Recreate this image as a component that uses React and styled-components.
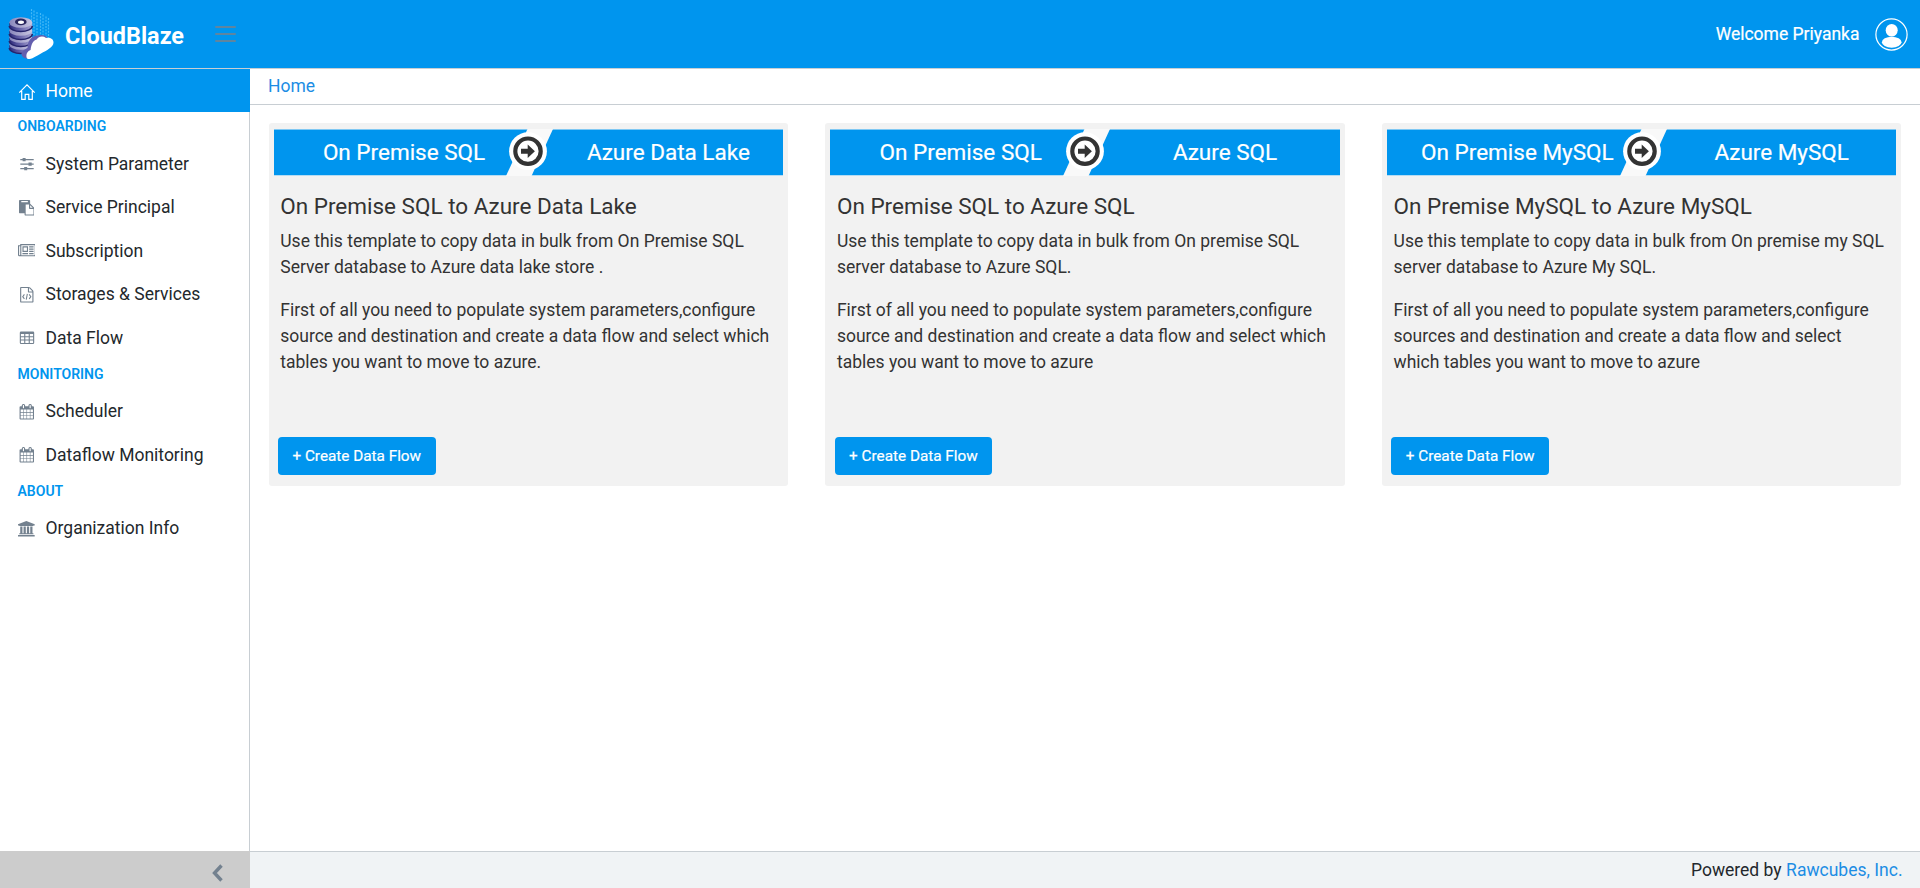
import React from "react";
import styled, { createGlobalStyle } from "styled-components";

const BLUE = "#0095ee";
const LINK = "#1c8de4";
const LINE = "#c8ced3";
const MUTED = "#73818f";

const GlobalStyle = createGlobalStyle`
  *, *::before, *::after { box-sizing: border-box; }
  body {
    margin: 0;
    background: #fff;
    color: #23282c;
    font-family: Roboto, "Liberation Sans", sans-serif;
    font-size: 17.5px;
    line-height: 1.5;
  }
  h2, p { margin: 0; font-weight: 400; }
`;

const Page = styled.div`
  display: flex;
  flex-direction: column;
  height: 100vh;
  overflow: hidden;
`;

const Header = styled.header`
  display: flex;
  align-items: center;
  flex: none;
  height: 69px;
  padding: 0 12px 0 8px;
  background: ${BLUE};
  border-bottom: 1px solid ${LINE};
  color: #fff;
`;

const Brand = styled.svg`
  display: block;
  width: 190px;
  height: 56px;
  overflow: visible;
`;

const MenuButton = styled.button`
  display: flex;
  flex-direction: column;
  gap: 5px;
  width: 21px;
  margin-left: 17px;
  padding: 0;
  border: 0;
  background: none;
`;

const MenuBar = styled.span`
  height: 2px;
  border-radius: 1px;
  background: #5f859f;
`;

const Welcome = styled.span`
  margin-left: auto;
  margin-right: 15.5px;
  font-size: 17.5px;
  -webkit-text-stroke: 0.2px #fff;
`;

const Avatar = styled.svg`
  display: block;
  width: 33px;
  height: 33px;
`;

const Body = styled.div`
  display: flex;
  flex: 1;
  min-height: 0;
`;

const Sidebar = styled.aside`
  display: flex;
  flex-direction: column;
  flex: none;
  width: 250px;
  background: linear-gradient(to left, ${LINE} 1px, #fff 1px);
`;

const Nav = styled.nav`
  flex: 1;
`;

const NavItem = styled.a`
  display: flex;
  align-items: center;
  gap: 10px;
  height: ${(p) => (p.$active ? 43 : 43.5)}px;
  padding: ${(p) => (p.$active ? 1 : 0)}px 0 0 17.5px;
  background: ${(p) => (p.$active ? BLUE : "transparent")};
  color: ${(p) => (p.$active ? "#fff" : "#23282c")};
  svg { color: ${(p) => (p.$active ? "#fff" : MUTED)}; }
`;

const IconBox = styled.span`
  display: flex;
  align-items: center;
  justify-content: center;
  width: 18px;
  height: 18px;
  svg { display: block; flex: none; margin-top: 1px; }
`;

const NavTitle = styled.div`
  height: 30px;
  padding-left: 17.5px;
  color: ${BLUE};
  font-size: 14px;
  font-weight: 600;
  line-height: 29.5px;
`;

const Minimizer = styled.button`
  display: flex;
  align-items: center;
  justify-content: flex-end;
  height: 37px;
  padding: 6px 27px 0 0;
  border: 0;
  background: #ccc;
`;

const Main = styled.main`
  display: flex;
  flex-direction: column;
  flex: 1;
  min-width: 0;
`;

const Breadcrumb = styled.div`
  height: 36px;
  padding: 4px 18px 0;
  border-bottom: 1px solid ${LINE};
  color: ${LINK};
`;

const Cards = styled.div`
  display: grid;
  grid-template-columns: repeat(3, 1fr);
  gap: 37.5px;
  flex: 1;
  align-items: start;
  padding: 18px 18.75px;
`;

const Card = styled.section`
  display: flex;
  flex-direction: column;
  height: 363px;
  padding: 6px 5px 11px;
  border-radius: 3px;
  background: #f2f2f2;
  color: #333;
`;

const Banner = styled.div`
  display: grid;
  grid-template-columns: 1fr 1fr;
  position: relative;
  height: 47px;
  background: ${BLUE};
  border-top: 1px solid #7fc8f3;
  border-bottom: 1px solid #b5dcf3;
  color: #fff;
  font-size: 22.5px;
  line-height: 45px;
  text-align: center;
  -webkit-text-stroke: 0.2px #fff;
`;

const BannerName = styled.span`
  padding-left: ${(p) => p.$inset}px;
  white-space: nowrap;
  z-index: 1;
`;

const BannerMark = styled.svg`
  position: absolute;
  left: 50%;
  top: -1px;
  width: 50px;
  height: 47px;
  margin-left: -25px;
`;

const CardText = styled.div`
  flex: 1;
  padding: 14px 6px 0 6.5px;
`;

const CardTitle = styled.h2`
  margin-bottom: 9px;
  font-size: 22.5px;
  line-height: 26px;
  padding-top: 3px;
`;

const Paragraph = styled.p`
  margin-bottom: 17.25px;
  line-height: 26px;
`;

const CreateButton = styled.button`
  align-self: flex-start;
  width: 157.5px;
  height: 38px;
  margin-left: 4.25px;
  padding: 0;
  border: 0;
  border-radius: 4px;
  background: ${BLUE};
  color: #fff;
  font: 400 15.3px Roboto, "Liberation Sans", sans-serif;
  -webkit-text-stroke: 0.2px #fff;
`;

const Footer = styled.footer`
  display: flex;
  align-items: center;
  justify-content: flex-end;
  gap: 4.5px;
  height: 37px;
  padding-right: 17.5px;
  border-top: 1px solid ${LINE};
  background: #f0f3f5;
`;

const FooterLink = styled.a`
  color: ${LINK};
`;

const Glyph = ({ w = 1792, children }) => (
  <svg width={(w / 1792) * 15.6} height="15.6" viewBox={`0 0 ${w} 1792`} fill="currentColor">
    {children}
  </svg>
);

const HomeIcon = () => (
  <svg width="18" height="18" viewBox="0 0 18 18" fill="none" stroke="currentColor" strokeWidth="1.2">
    <path d="M1.300 9.700 9 1.900l7.700 7.800M3.700 8v8.300h3.500v-5h3.600v5h3.500V8" />
  </svg>
);

const SlidersIcon = () => (
  <svg width="18" height="18" viewBox="0 0 18 18" fill="currentColor">
    <path d="M2.300 4h13.400v1.200H2.300zM2.300 8.500h13.400v1.200H2.300zM2.300 13h13.400v1.200H2.300zM4.600 3h3v3.300h-3zM10.500 7.500h3.200v3.300h-3.200zM6.200 12h3v3.300h-3z" />
  </svg>
);

const PasteIcon = () => (
  <Glyph>
    <path d="M768 1664h896v-640h-416q-40 0-68-28t-28-68v-416h-384v1152zm256-1440v-64q0-13-9.500-22.500t-22.500-9.500h-704q-13 0-22.500 9.500t-9.500 22.500v64q0 13 9.500 22.500t22.500 9.500h704q13 0 22.500-9.500t9.500-22.500zm256 672h299l-299-299v299zm512 128v672q0 40-28 68t-68 28h-960q-40 0-68-28t-28-68v-160h-544q-40 0-68-28t-28-68v-1344q0-40 28-68t68-28h1088q40 0 68 28t28 68v328q21 13 36 28l408 408q28 28 48 68t20 76z" />
  </Glyph>
);

const NewsIcon = () => (
  <Glyph w={2048}>
    <path d="M1024 512h-384v384h384v-384zm128 640v128h-640v-128h640zm0-768v640h-640v-640h640zm640 768v128h-512v-128h512zm0-256v128h-512v-128h512zm0-256v128h-512v-128h512zm0-256v128h-512v-128h512zm-1536 960v-960h-128v960q0 26 19 45t45 19 45-19 19-45zm1664 0v-1088h-1536v1088q0 33-11 64h1483q26 0 45-19t19-45zm128-1216v1216q0 80-56 136t-136 56h-1664q-80 0-136-56t-56-136v-1088h256v-128h1792z" />
  </Glyph>
);

const CodeFileIcon = () => (
  <Glyph>
    <path d="M1596 380q28 28 48 76t20 88v1152q0 40-28 68t-68 28h-1344q-40 0-68-28t-28-68v-1600q0-40 28-68t68-28h896q40 0 88 20t76 48zm-444-244v376h376q-10-29-22-41l-313-313q-12-12-41-22zm384 1528v-1024h-416q-40 0-68-28t-28-68v-416h-768v1536h1280z" />
    <path d="M620 850 430 1110 620 1370M1172 850 1362 1110 1172 1370M960 790 832 1450" fill="none" stroke="currentColor" strokeWidth="120" />
  </Glyph>
);

const TableIcon = () => (
  <svg width="18" height="18" viewBox="0 0 18 18" fill="currentColor">
    <path fillRule="evenodd" d="M3 2.500h12a1.200 1.200 0 0 1 1.200 1.200v10a1.200 1.200 0 0 1-1.200 1.200H3a1.200 1.200 0 0 1-1.200-1.200v-10A1.200 1.200 0 0 1 3 2.500zM2.900 5v2.300h3.300V5zM7.300 5v2.300h3.400V5zM11.800 5v2.300h3.300V5zM2.900 8.300v2.300h3.300V8.300zM7.300 8.300v2.300h3.400V8.300zM11.800 8.300v2.300h3.300V8.300zM2.900 11.600v2.300h3.300v-2.300zM7.300 11.600v2.300h3.400v-2.300zM11.800 11.600v2.300h3.300v-2.300z" />
  </svg>
);

const CalendarIcon = () => (
  <Glyph>
    <path d="M192 1664h288v-288h-288v288zm352 0h320v-288h-320v288zm-352-352h288v-320h-288v320zm352 0h320v-320h-320v320zm-352-384h288v-288h-288v288zm736 736h320v-288h-320v288zm-384-736h320v-288h-320v288zm768 736h288v-288h-288v288zm-384-352h320v-320h-320v320zm-352-864v-288q0-13-9.500-22.500t-22.500-9.500h-64q-13 0-22.500 9.500t-9.500 22.500v288q0 13 9.500 22.500t22.500 9.500h64q13 0 22.500-9.500t9.500-22.500zm736 864h288v-320h-288v320zm-384-384h320v-288h-320v288zm384 0h288v-288h-288v288zm32-480v-288q0-13-9.500-22.500t-22.500-9.500h-64q-13 0-22.500 9.500t-9.500 22.500v288q0 13 9.500 22.500t22.500 9.500h64q13 0 22.500-9.500t9.500-22.500zm384-64v1280q0 52-38 90t-90 38h-1408q-52 0-90-38t-38-90v-1280q0-52 38-90t90-38h128v-96q0-66 47-113t113-47h64q66 0 113 47t47 113v96h384v-96q0-66 47-113t113-47h64q66 0 113 47t47 113v96h128q52 0 90 38t38 90z" />
  </Glyph>
);

const BankIcon = () => (
  <Glyph w={1920}>
    <path d="M960 0l960 384v128h-128q0 26-20.500 45t-48.500 19h-1526q-28 0-48.500-19t-20.500-45h-128v-128zm-704 640h256v768h128v-768h256v768h128v-768h256v768h128v-768h256v768h59q28 0 48.500 19t20.500 45v64h-1664v-64q0-26 20.500-45t48.500-19h59v-768zm1595 960q28 0 48.500 19t20.500 45v128h-1920v-128q0-26 20.500-45t48.500-19h1782z" />
  </Glyph>
);

const NAV = [
  { label: "Home", icon: HomeIcon, active: true },
  { title: "ONBOARDING" },
  { label: "System Parameter", icon: SlidersIcon },
  { label: "Service Principal", icon: PasteIcon },
  { label: "Subscription", icon: NewsIcon },
  { label: "Storages & Services", icon: CodeFileIcon },
  { label: "Data Flow", icon: TableIcon },
  { title: "MONITORING" },
  { label: "Scheduler", icon: CalendarIcon },
  { label: "Dataflow Monitoring", icon: CalendarIcon },
  { title: "ABOUT" },
  { label: "Organization Info", icon: BankIcon },
];

const CARDS = [
  {
    from: "On Premise SQL",
    to: "Azure Data Lake",
    intro: "Use this template to copy data in bulk from On Premise SQL Server database to Azure data lake store .",
    steps: "First of all you need to populate system parameters,configure source and destination and create a data flow and select which tables you want to move to azure.",
  },
  {
    from: "On Premise SQL",
    to: "Azure SQL",
    intro: "Use this template to copy data in bulk from On premise SQL server database to Azure SQL.",
    steps: "First of all you need to populate system parameters,configure source and destination and create a data flow and select which tables you want to move to azure",
  },
  {
    from: "On Premise MySQL",
    to: "Azure MySQL",
    intro: "Use this template to copy data in bulk from On premise my SQL server database to Azure My SQL.",
    steps: "First of all you need to populate system parameters,configure sources and destination and create a data flow and select which tables you want to move to azure",
  },
];

const Logo = () => (
  <Brand viewBox="8 6 190 56">
    <defs>
      <linearGradient id="disk" x1="0" x2="1">
        <stop offset="0" stopColor="#2b2878" />
        <stop offset="0.45" stopColor="#6561a8" />
        <stop offset="1" stopColor="#aaa7d2" />
      </linearGradient>
      <linearGradient id="lid" x1="0" x2="1">
        <stop offset="0" stopColor="#8986bb" />
        <stop offset="1" stopColor="#c9c7e2" />
      </linearGradient>
    </defs>
    <g stroke="#4fc0fa" strokeWidth="1.200" strokeDasharray="2 1.200" opacity="0.850">
      <path d="M31.500 9v27M34 10.500v26M37 12v25M40.500 13v24M43 14.500v23M46 16.500v21M48.500 18v21" />
    </g>
    {[49, 42, 35, 27].map((y) => (
      <g key={y}>
        <path d={`M9.300 ${y - 4}v3a11.500 5.500 0 0 0 23 0v-3z`} fill="url(#disk)" />
        <path d={`M9.300 ${y - 1}a11.500 5.500 0 0 0 23 0`} fill="none" stroke="#25236b" strokeWidth="1.500" />
        <ellipse cx="20.800" cy={y - 4.500} rx="11.500" ry="5.300" fill="url(#lid)" />
      </g>
    ))}
    <ellipse cx="20.800" cy="21.900" rx="5.800" ry="3.300" fill="#29265e" />
    <ellipse cx="21" cy="22.200" rx="3" ry="1.700" fill="#fff" />
    <path d="M21.500 54c0-3 3-4.500 6-6 0-8 5-13 11-12.500 4-1 7 0 9 2L36 50l-8 8.500c-4 0-6.500-2-6.500-4.500z" fill="#645fae" />
    <path d="M26.600 57.500c-.8-3.500 1-6.500 4-7.500.5-5.500 2.500-9.500 6-10.500 2-3 6-4 9.500-1.500 4-.7 7.400 1 7.400 4.500 0 4.500-7 8-12.500 11-4 2-8 5-11 5.500-1.900.2-3.100-.3-3.400-1.500z" fill="#fff" />
    <text x="65" y="44" fill="#fff" fontFamily="Roboto, sans-serif" fontWeight="700" fontSize="24" textLength="119" lengthAdjust="spacingAndGlyphs">
      CloudBlaze
    </text>
  </Brand>
);

function TemplateCard({ from, to, intro, steps }) {
  return (
    <Card>
      <Banner>
        <BannerName $inset={6}>{from}</BannerName>
        <BannerName $inset={25.5}>{to}</BannerName>
        <BannerMark viewBox="0 0 50 47">
          <path d="M24.500 0H50L28.500 47H3z" fill="#f9f9f9" />
          <circle cx="25" cy="22.200" r="18.900" fill="#fff" />
          <circle cx="25" cy="22.200" r="12.700" fill="none" stroke="#333" strokeWidth="4.200" />
          <path d="M18 19.700h6.700v-4.300l7.200 6.800-7.200 6.800v-4.300H18z" fill="#333" />
        </BannerMark>
      </Banner>
      <CardText>
        <CardTitle>{from} to {to}</CardTitle>
        <Paragraph>{intro}</Paragraph>
        <Paragraph>{steps}</Paragraph>
      </CardText>
      <CreateButton>+ Create Data Flow</CreateButton>
    </Card>
  );
}

export default function App() {
  return (
    <Page>
      <GlobalStyle />
      <Header>
        <Logo />
        <MenuButton aria-label="Menu">
          <MenuBar />
          <MenuBar />
          <MenuBar />
        </MenuButton>
        <Welcome>Welcome Priyanka</Welcome>
        <Avatar viewBox="0 0 33 33">
          <circle cx="16.500" cy="16.500" r="15.600" fill="none" stroke="#fff" strokeWidth="1.200" />
          <ellipse cx="16.700" cy="12.300" rx="6" ry="6.300" fill="#fff" />
          <ellipse cx="16.700" cy="24.200" rx="9.800" ry="5.500" fill="#fff" />
        </Avatar>
      </Header>
      <Body>
        <Sidebar>
          <Nav>
            {NAV.map(({ title, label, icon: Icon, active }) =>
              title ? (
                <NavTitle key={title}>{title}</NavTitle>
              ) : (
                <NavItem key={label} $active={active}>
                  <IconBox><Icon /></IconBox>
                  {label}
                </NavItem>
              )
            )}
          </Nav>
          <Minimizer aria-label="Collapse">
            <svg width="11" height="18" viewBox="0 0 11 18" fill="none" stroke={MUTED} strokeWidth="3.400">
              <path d="M9.500 1.500 2.500 9l7 7.500" />
            </svg>
          </Minimizer>
        </Sidebar>
        <Main>
          <Breadcrumb>Home</Breadcrumb>
          <Cards>
            {CARDS.map((card) => (
              <TemplateCard key={card.to} {...card} />
            ))}
          </Cards>
          <Footer>
            <span>Powered by</span>
            <FooterLink>Rawcubes, Inc.</FooterLink>
          </Footer>
        </Main>
      </Body>
    </Page>
  );
}
